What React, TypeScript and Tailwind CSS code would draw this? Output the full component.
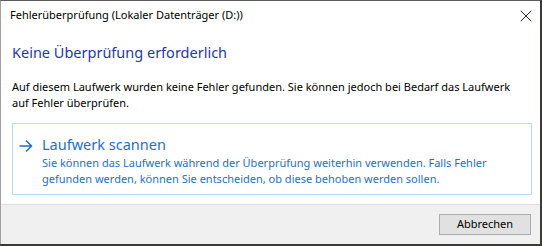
import { X } from 'lucide-react'

export default function App() {
  return (
    <div className="h-[246px] w-[542px] overflow-hidden bg-[#3d3b2c] font-['Noto_Sans',sans-serif]">
      <div className="flex h-[244px] w-[540px] flex-col border-t border-l border-t-[#5b5b5b] border-l-[#a0a0a0] bg-white">
        <header className="flex h-[29px] items-center justify-between pl-[9px] pr-[4px]">
          <span className="text-[11px] text-black">Fehlerüberprüfung (Lokaler Datenträger (D:))</span>
          <X className="h-[20px] w-[20px] text-black" strokeWidth={1} />
        </header>

        <div className="flex flex-1 flex-col px-[11px]">
          <h1 className="mt-[12px] text-[14.5px] leading-[20px] text-[#1e3aa8]">
            Keine Überprüfung erforderlich
          </h1>
          <p className="mt-[17px] text-[11px] leading-[16px] text-black">
            Auf diesem Laufwerk wurden keine Fehler gefunden. Sie können jedoch bei Bedarf das Laufwerk auf Fehler
            überprüfen.
          </p>

          <button className="mt-[12px] flex h-[72px] w-[520px] gap-[9px] border border-[#b9dcf5] pt-[10px] pl-[6px] text-left">
            <svg className="mt-[5px] h-[14px] w-[14px] shrink-0" viewBox="0 0 14 14" fill="none">
              <path d="M0.5 7h12M7 1.5 12.5 7 7 12.5" stroke="#1c6fd3" strokeWidth="1.5" />
            </svg>
            <div className="flex flex-col">
              <span className="text-[14.5px] leading-[20px] text-[#1c6fd3]">Laufwerk scannen</span>
              <span className="mt-[1px] text-[11px] leading-[16px] text-[#1c6fd3]">
                Sie können das Laufwerk während der Überprüfung weiterhin verwenden. Falls Fehler
                <br />
                gefunden werden, können Sie entscheiden, ob diese behoben werden sollen.
              </span>
            </div>
          </button>
        </div>

        <footer className="flex h-[40px] items-start justify-end border-t border-[#dfdfdf] bg-[#f0f0f0] pt-[9px] pr-[9px]">
          <button className="h-[21px] w-[92px] border border-[#adadad] bg-[#e1e1e1] text-[11px] text-black">
            Abbrechen
          </button>
        </footer>
      </div>
    </div>
  )
}
